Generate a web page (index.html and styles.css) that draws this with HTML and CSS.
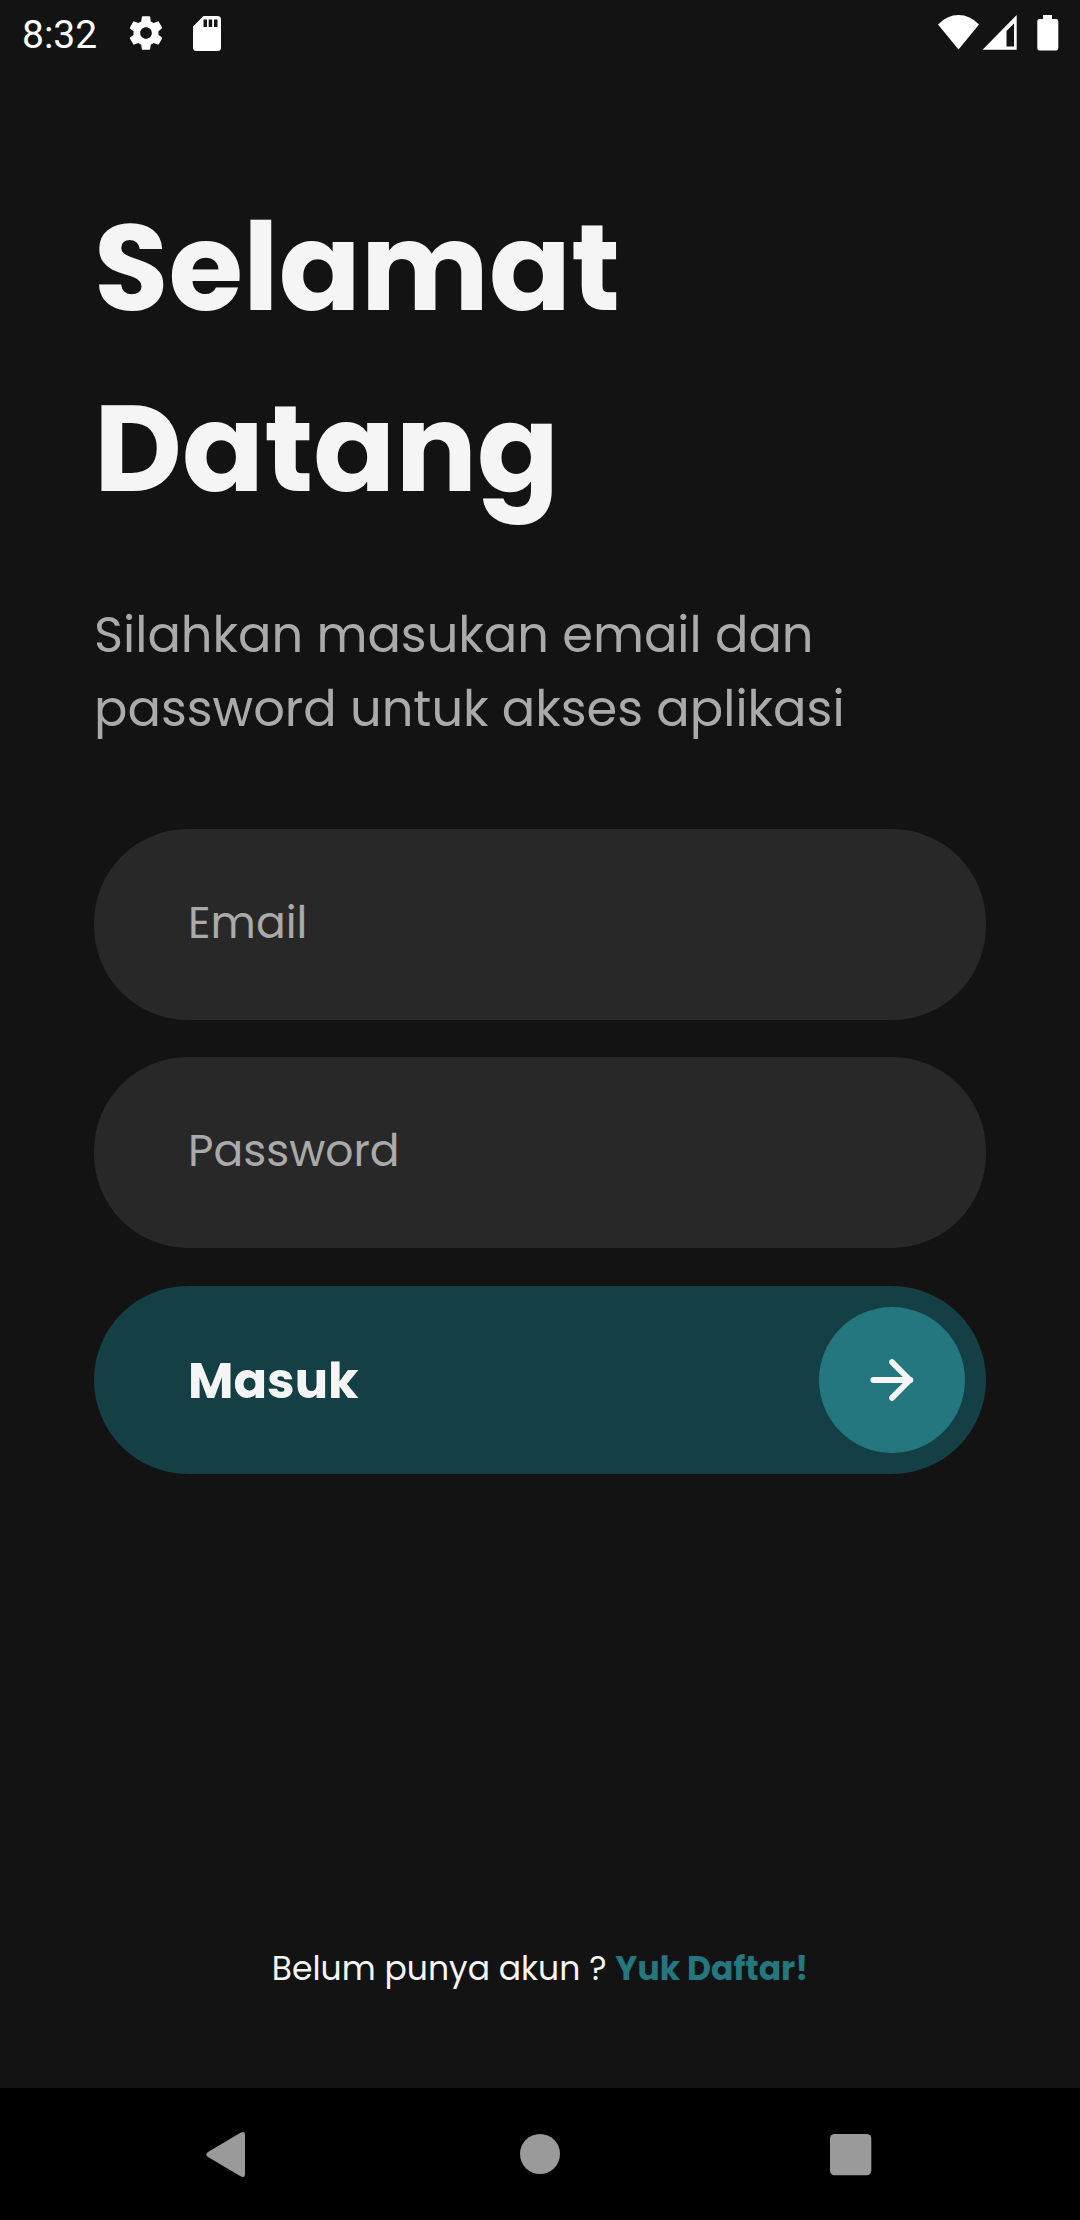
FILE: index.html
```
<!DOCTYPE html>
<html lang="id">
<head>
<meta charset="utf-8">
<title>Selamat Datang</title>
<link rel="stylesheet" href="styles.css">
</head>
<body>
<header class="status">
  <span class="clock">8:32</span>
  <svg class="gear" width="40" height="40" viewBox="0 0 24 24"><path fill="#fff" d="M19.43 12.98c.04-.32.07-.64.07-.98s-.03-.66-.07-.98l2.11-1.65c.19-.15.24-.42.12-.64l-2-3.46c-.12-.22-.39-.3-.61-.22l-2.49 1c-.52-.4-1.08-.73-1.69-.98l-.38-2.65C14.46 2.18 14.25 2 14 2h-4c-.25 0-.46.18-.49.42l-.38 2.65c-.61.25-1.17.59-1.69.98l-2.49-1c-.23-.09-.49 0-.61.22l-2 3.46c-.13.22-.07.49.12.64l2.11 1.65c-.04.32-.07.65-.07.98s.03.66.07.98l-2.11 1.65c-.19.15-.24.42-.12.64l2 3.46c.12.22.39.3.61.22l2.49-1c.52.4 1.08.73 1.69.98l.38 2.65c.03.24.24.42.49.42h4c.25 0 .46-.18.49-.42l.38-2.65c.61-.25 1.17-.59 1.69-.98l2.49 1c.23.09.49 0 .61-.22l2-3.46c.12-.22.07-.49-.12-.64l-2.11-1.65zM12 15.5c-1.93 0-3.5-1.57-3.5-3.5s1.57-3.500 3.500-3.500 3.500 1.570 3.500 3.500-1.570 3.500-3.500 3.500z"/></svg>
  <svg class="card" width="28" height="35" viewBox="0 0 28 35"><path fill="#fff" fill-rule="evenodd" d="M10.500 0H24.500a3.500 3.500 0 0 1 3.500 3.500V31.500a3.500 3.500 0 0 1-3.500 3.500H3.500A3.500 3.500 0 0 1 0 31.500V10.500zM10.500 3.500V11H14V3.500zM15.700 3.500V11H19.200V3.500zM21 3.500V11H24.500V3.500z"/></svg>
  <svg class="signals" width="121" height="36" viewBox="0 0 121 36">
    <path fill="#fff" d="M0 9.500Q9 0 20.500 0T41 9.500L20.500 34.500z"/>
    <path fill="#fff" fill-rule="evenodd" d="M78.700 0V34.700H44.500zM76 8.500L68.500 16V31.500H76z"/>
    <path fill="#fff" d="M105 0h9v4h4a2.300 2.300 0 0 1 2.300 2.300V33.200a2.300 2.300 0 0 1-2.300 2.300h-16.400a2.300 2.300 0 0 1-2.300-2.300V6.300a2.300 2.300 0 0 1 2.300-2.300h3.400z"/>
  </svg>
</header>
<main class="login">
  <h1 class="title">Selamat<br>Datang</h1>
  <p class="subtitle">Silahkan masukan email dan<br>password untuk akses aplikasi</p>
  <form class="form">
    <input class="field" type="email" placeholder="Email">
    <input class="field" type="password" placeholder="Password">
    <button class="submit" type="button">
      <span class="label">Masuk</span>
      <span class="go"><svg width="66" height="66" viewBox="0 0 24 24" fill="none" stroke="#f5f5f5" stroke-width="2.100" stroke-linecap="round" stroke-linejoin="round"><path d="M5.200 12H18.700M12 5.500L18.500 12L12 18.500"/></svg></span>
    </button>
  </form>
  <p class="signup">Belum punya akun ? <a class="link">Yuk Daftar!</a></p>
</main>
<nav class="nav">
  <svg width="1080" height="132" viewBox="0 0 1080 132"><g fill="#9a9a9a"><path d="M240.500 44.700Q245 42.500 245 47V86Q245 90.500 240.500 88.300L208 69Q204.500 66.500 208 64z"/><circle cx="540" cy="66" r="20"/><rect x="830" y="46" width="41.300" height="41.300" rx="4.500"/></g></svg>
</nav>
</body>
</html>
```
FILE: styles.css
```
* { box-sizing: border-box; }
body {
  margin: 0;
  width: 1080px;
  height: 2220px;
  display: flex;
  flex-direction: column;
  background: #131313;
  color: #f5f5f5;
  font-family: Poppins, Inter, sans-serif;
  font-feature-settings: "cv11";
}
.status {
  height: 66px;
  display: flex;
  align-items: flex-start;
  padding: 0 21px 0 22px;
}
.clock {
  width: 78px;
  margin-top: 12px;
  font: 39px/46px Roboto, sans-serif;
  color: #fff;
}
.gear { margin: 13px 0 0 26px; }
.card { margin: 16px 0 0 27px; }
.signals { margin: 15px 0 0 auto; }
.login {
  flex: 1;
  display: flex;
  flex-direction: column;
  padding: 111px 94px 95px;
}
.title {
  margin: 0;
  font-size: 121px;
  line-height: 181px;
  font-weight: 700;
}
.subtitle {
  margin: 59px 0 0;
  font-size: 49.5px;
  line-height: 74.25px;
  color: #aaa;
  white-space: nowrap;
}
.form {
  margin-top: 82px;
  display: flex;
  flex-direction: column;
  gap: 37.5px;
}
.field {
  height: 191px;
  border: 0;
  border-radius: 94px;
  padding: 0 94px 4px;
  background: #282828;
  color: #f5f5f5;
  font: 44px Poppins, Inter, sans-serif;
}
.field::placeholder { color: #aaa; opacity: 1; }
.submit {
  height: 188px;
  border: 0;
  border-radius: 94px;
  padding: 0 21px 0 94px;
  display: flex;
  align-items: center;
  justify-content: space-between;
  background: #143f45;
  color: #f5f5f5;
  font: 700 49.5px Poppins, Inter, sans-serif;
}
.label { padding-top: 2px; }
.go {
  width: 146px;
  height: 146px;
  border-radius: 50%;
  display: flex;
  align-items: center;
  justify-content: center;
  background: #24767f;
}
.signup {
  margin: auto 0 0;
  text-align: center;
  font-size: 33px;
  line-height: 49.5px;
}
.link { font-weight: 700; color: #24767f; }
.nav { height: 132px; background: #000; }
.nav svg { display: block; }
```
